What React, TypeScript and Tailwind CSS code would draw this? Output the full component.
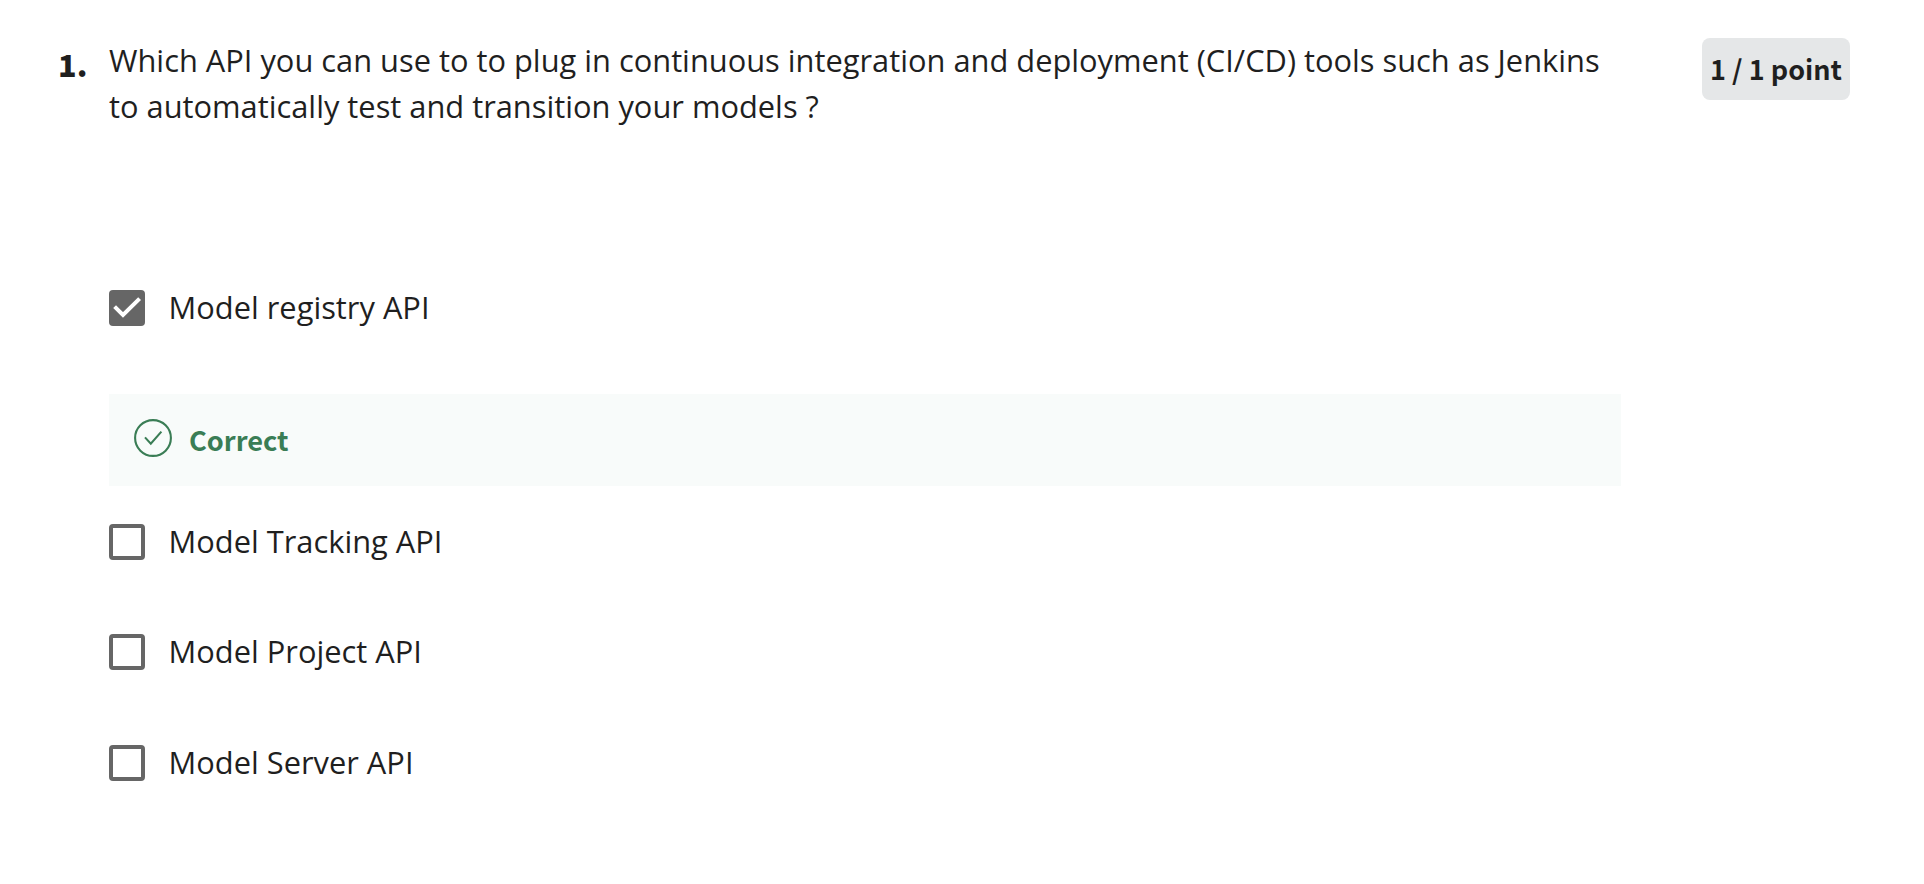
type Option = { label: string; checked?: boolean; correct?: boolean };

const options: Option[] = [
  { label: "Model registry API", checked: true, correct: true },
  { label: "Model Tracking API" },
  { label: "Model Project API" },
  { label: "Model Server API" },
];

function Checkbox({ checked }: { checked?: boolean }) {
  if (!checked) {
    return <span className="size-9 shrink-0 rounded-[4px] border-4 border-[#666666]" />;
  }
  return (
    <span className="size-9 shrink-0 rounded-[4px] bg-[#666666]">
      <svg className="size-9" viewBox="0 0 36 36" fill="none" stroke="#ffffff" strokeWidth="4">
        <path d="M5.6 16.6 L14 25 L30.6 8.6" />
      </svg>
    </span>
  );
}

function Feedback() {
  return (
    <div className="mt-[68px] mb-[38px] flex h-[92px] w-[1512px] items-center bg-[#f8fbfa] pl-[25px] text-[#3a7d55]">
      <svg className="mb-1 size-[38px] shrink-0" viewBox="0 0 38 38" fill="none" stroke="currentColor" strokeWidth="2.1">
        <circle cx="19" cy="19" r="17.9" />
        <path d="M11 18.4 L16.8 24.6 L27.4 12.6" />
      </svg>
      <span className="ml-[17px] pb-[2px] font-['Noto_Sans_CJK_SC',sans-serif] text-[27.2px] leading-10 font-bold">Correct</span>
    </div>
  );
}

export default function App() {
  return (
    <main className="flex h-[884px] w-[1924px] items-start overflow-hidden bg-white pl-[58px] font-['Open_Sans',sans-serif] text-[#1f1f1f]">
      <div className="mt-[41px] w-[51px] shrink-0 font-['Noto_Sans_CJK_SC',sans-serif] text-[30.6px] leading-[46px] font-black">1.</div>
      <section className="mt-[37px] w-[1593px] shrink-0">
        <p className="text-[30.82px] leading-[46px] whitespace-nowrap">
          Which API you can use to to plug in continuous integration and deployment (CI/CD) tools such as Jenkins
          <br />
          to automatically test and transition your models ?
        </p>
        <ul className="mt-[161px]">
          {options.map((option, i) => (
            <li key={option.label}>
              <label className={i > 1 ? (i === 3 ? "mt-[75px] flex h-9 items-center" : "mt-[74px] flex h-9 items-center") : "flex h-9 items-center"}>
                <Checkbox checked={option.checked} />
                <span className="ml-[23.6px] pb-[2px] text-[30.82px] leading-[34px]">{option.label}</span>
              </label>
              {option.correct && <Feedback />}
            </li>
          ))}
        </ul>
      </section>
      <div className="mt-[38px] flex h-[62px] w-[148px] items-center justify-center rounded-lg bg-[#e5e7e8] font-['Noto_Sans_CJK_SC',sans-serif] text-[27px] leading-10 font-bold whitespace-nowrap">
        1 / 1 point
      </div>
    </main>
  );
}
